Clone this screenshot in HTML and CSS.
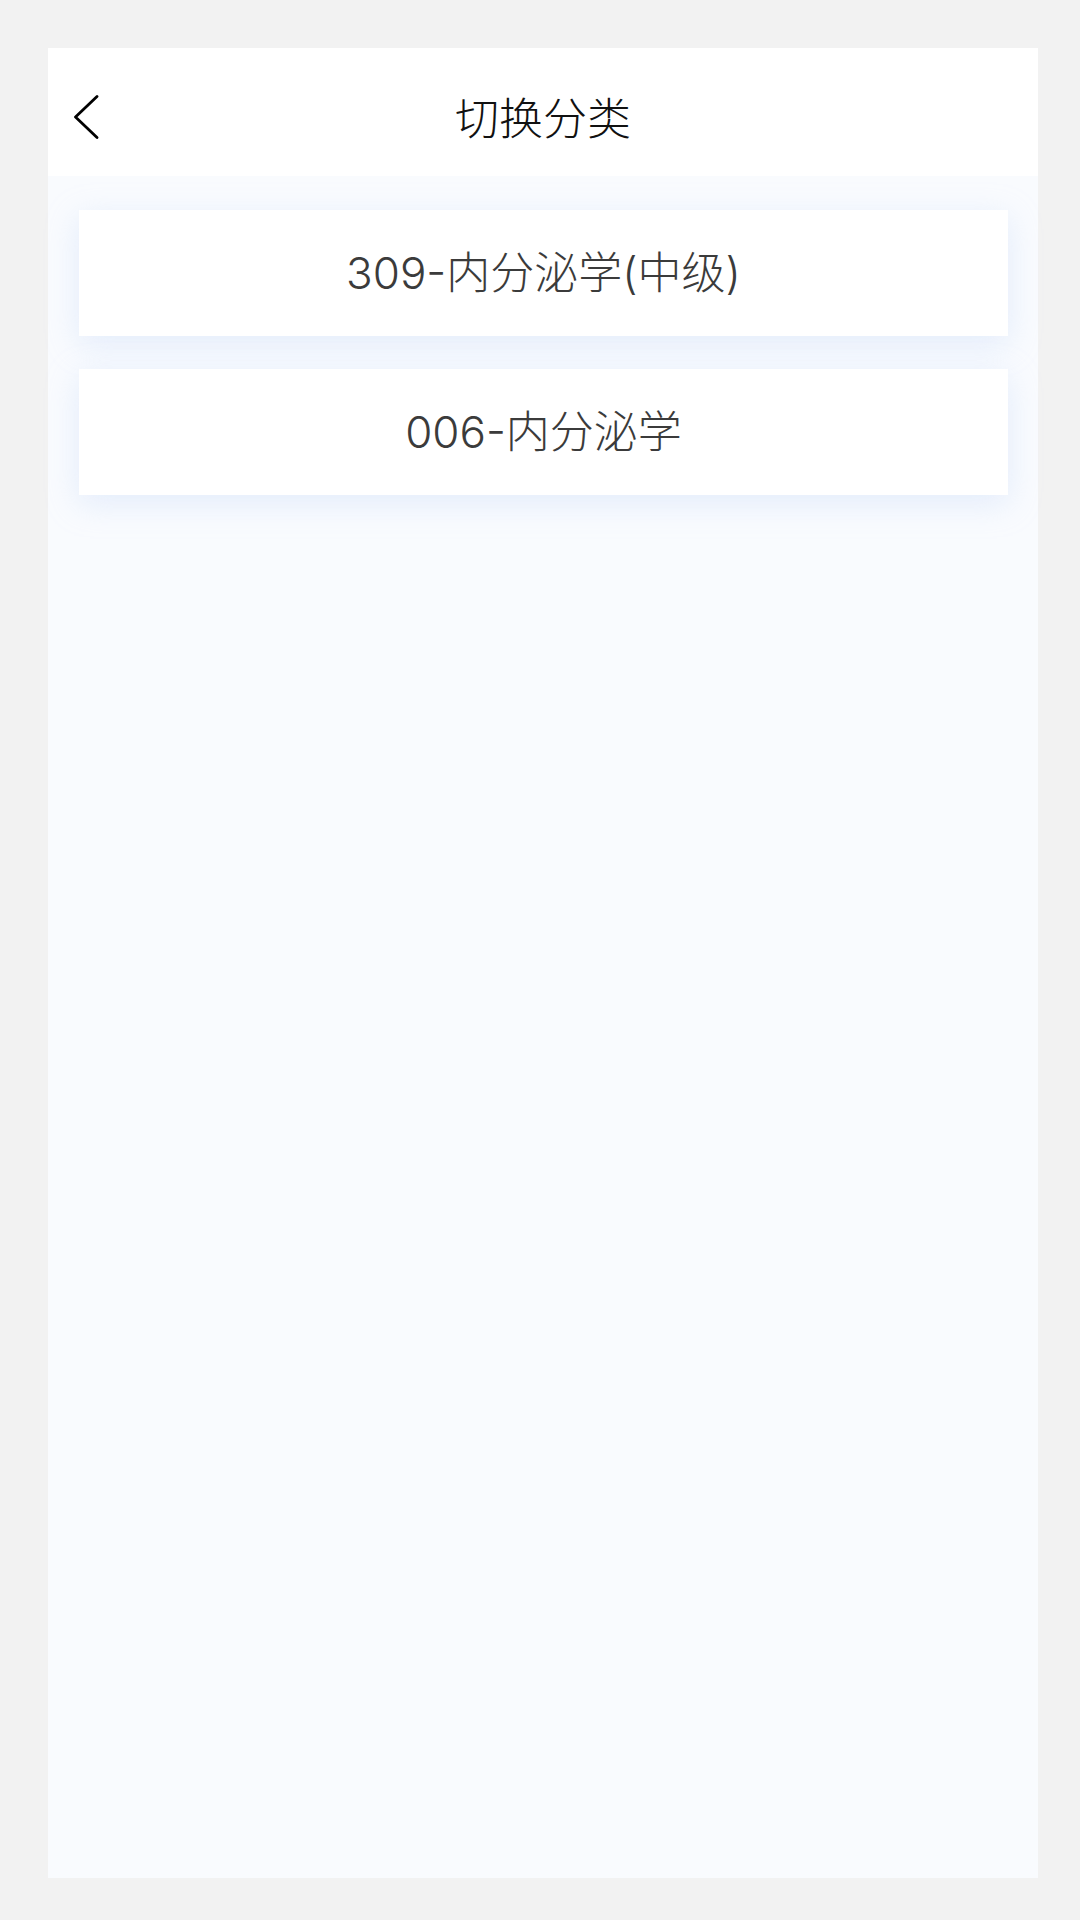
FILE: index.html
```html
<!DOCTYPE html>
<html lang="zh-CN">
<head>
<meta charset="utf-8">
<title>切换分类</title>
<link rel="stylesheet" href="styles.css">
</head>
<body>
<div class="panel">
  <header class="topbar">
    <div class="back">
      <svg class="back-icon" width="28" height="48" viewBox="0 0 28 48" fill="none">
        <path d="M23 3.5 L1.5 24 L23 44.5" stroke="#000" stroke-width="2.8" stroke-linecap="round" stroke-linejoin="round"/>
      </svg>
    </div>
    <h1 class="title">切换分类</h1>
    <div class="spacer"></div>
  </header>
  <main class="list">
    <div class="card">309-内分泌学(中级)</div>
    <div class="card">006-内分泌学</div>
  </main>
</div>
</body>
</html>
```
FILE: styles.css
```css
html, body {
  margin: 0;
  padding: 0;
}
body {
  background: #f2f2f2;
  font-family: Inter, "Noto Sans CJK SC", "Noto Sans", sans-serif;
}
.panel {
  margin: 48px 42px 0 48px;
  height: 1830px;
  background: #f9fbfe;
  display: flex;
  flex-direction: column;
}
.topbar {
  height: 128px;
  box-sizing: border-box;
  padding: 10px 26px 0 26px;
  background: #ffffff;
  display: grid;
  grid-template-columns: 1fr auto 1fr;
  align-items: center;
}
.back {
  display: flex;
  align-items: center;
}
.back-icon {
  display: block;
}
.title {
  margin: 0;
  font-size: 44px;
  font-weight: 300;
  color: #111111;
  line-height: 1;
  position: relative;
  top: 2px;
}
.list {
  padding: 34px 30px 0 31px;
  display: flex;
  flex-direction: column;
  gap: 33px;
}
.card {
  height: 126px;
  background: #ffffff;
  box-shadow: 0 8px 30px rgba(185, 210, 245, 0.35);
  display: flex;
  align-items: center;
  justify-content: center;
  font-size: 44px;
  font-weight: 300;
  color: #3b3b3b;
  line-height: 1;
}
.card-narrow {
  letter-spacing: -0.5px;
}
```
